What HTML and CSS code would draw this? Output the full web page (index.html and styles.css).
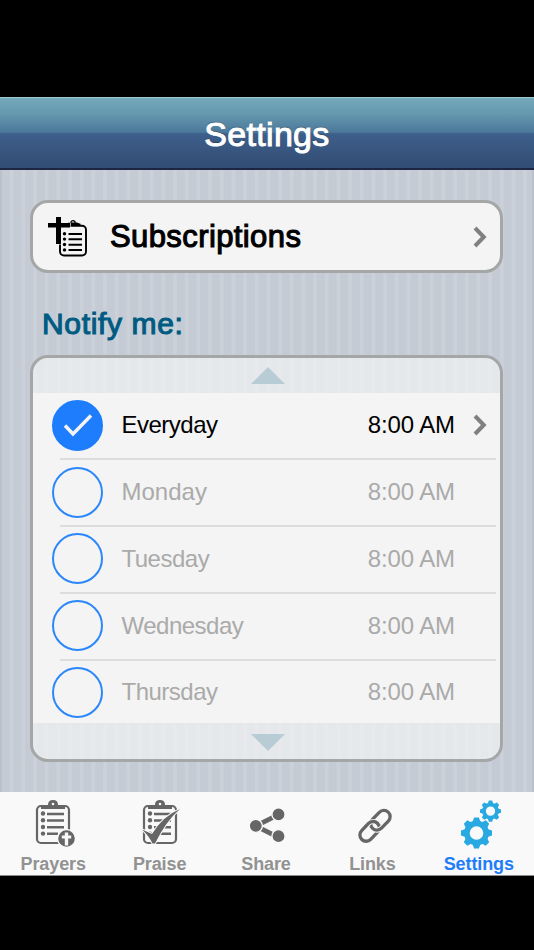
FILE: index.html
```html
<!DOCTYPE html>
<html lang="en">
<head>
  <meta charset="UTF-8" />
  <meta name="viewport" content="width=device-width, initial-scale=1.0" />
  <title>Settings</title>
  <link rel="stylesheet" href="styles.css">
</head>
<body>
  <header class="navbar"><h1>Settings</h1></header>

  <main class="content">
    <a class="card subscriptions">
      <svg class="sub-icon" width="40" height="42" viewBox="0 0 40 42">
        <rect x="12" y="9.800" width="26" height="29.700" rx="4" fill="none" stroke="#000" stroke-width="1.9"/>
        <path d="M20 9V7h2.500v3H31l2-2-4-1.500H20z" fill="#000"/>
        <circle cx="25" cy="6.800" r="2.200" fill="none" stroke="#000" stroke-width="1.200"/>
        <path d="M8 1h5v6h9v4.500h-9V28H8V11.500H0V7h8z" fill="#000" stroke="#f4f4f4" stroke-width="1.200" paint-order="stroke"/>
        <path d="M20.500 18H34M20.500 23.300H34M20.500 28.700H34M20.500 34H34" stroke="#000" stroke-width="2"/>
        <g fill="#000"><circle cx="16.500" cy="17.700" r="1.700"/><circle cx="16.500" cy="23.100" r="1.700"/><circle cx="16.500" cy="28.500" r="1.700"/><circle cx="16.500" cy="33.900" r="1.700"/></g>
      </svg>
      <span class="label">Subscriptions</span>
      <svg class="chevron" width="14" height="22" viewBox="0 0 14 22"><path d="M2 2l8.800 9L2 20"/></svg>
    </a>

    <h2>Notify me:</h2>

    <section class="card schedule">
      <div class="scroll-hint"><svg width="34" height="17" viewBox="0 0 34 17"><path d="M0 17L17 0l17 17z"/></svg></div>
      <ul class="days">
        <li class="day active">
          <span class="check"><svg width="30" height="24" viewBox="0 0 30 24"><path d="M2 12.500l8 8.500L28 2.500"/></svg></span>
          <span class="name">Everyday</span><span class="time">8:00 AM</span>
          <svg class="chevron" width="14" height="22" viewBox="0 0 14 22"><path d="M2 2l8.800 9L2 20"/></svg>
        </li>
        <li class="day"><span class="check"></span><span class="name wide">Monday</span><span class="time">8:00 AM</span></li>
        <li class="day"><span class="check"></span><span class="name">Tuesday</span><span class="time">8:00 AM</span></li>
        <li class="day"><span class="check"></span><span class="name">Wednesday</span><span class="time">8:00 AM</span></li>
        <li class="day"><span class="check"></span><span class="name">Thursday</span><span class="time">8:00 AM</span></li>
      </ul>
      <div class="scroll-hint bottom"><svg width="34" height="17" viewBox="0 0 34 17"><path d="M0 0h34L17 17z"/></svg></div>
    </section>
  </main>

  <nav class="tabbar">
    <a class="tab">
      <svg width="44" height="50" viewBox="-1 0 44 50">
        <rect x="5" y="6" width="32" height="37" rx="4" fill="none" stroke="#666" stroke-width="2.200"/>
        <path d="M9 9V7q0-2 2-2h5q0-5 5-5t5 5h5q2 0 2 2v2z"/>
        <circle cx="21" cy="4" r="1.300" fill="#f9f9f9"/>
        <path class="lines" d="M15 14h17M15 20.500h17M15 27.200h17M15 33.800h11"/>
        <circle cx="11" cy="13.500" r="2.200"/><circle cx="11" cy="20.200" r="2.200"/><circle cx="11" cy="27" r="2.200"/><circle cx="11" cy="33.600" r="2.200"/>
        <circle cx="34.500" cy="38.500" r="9" stroke="#f9f9f9" stroke-width="1.400"/>
        <path d="M32.800 32.500h3.400v3h3v3h-3v7h-3.400v-7h-3v-3h3z" fill="#f9f9f9"/>
      </svg>
      <span>Prayers</span>
    </a>
    <a class="tab">
      <svg width="44" height="50" viewBox="-1 0 44 50">
        <rect x="5" y="6" width="32" height="37" rx="4" fill="none" stroke="#666" stroke-width="2.200"/>
        <path d="M9 9V7q0-2 2-2h5q0-5 5-5t5 5h5q2 0 2 2v2z"/>
        <circle cx="21" cy="4" r="1.300" fill="#f9f9f9"/>
        <path class="lines" d="M15 14h17M15 20.500h17M15 27.200h17M15 33.800h17"/>
        <circle cx="11" cy="13.500" r="2.200"/><circle cx="11" cy="20.200" r="2.200"/><circle cx="11" cy="27" r="2.200"/><circle cx="11" cy="33.600" r="2.200"/>
        <path d="M3 29.500l10 4.500Q24 16 41 9 27 21 16 43.500h-2.500Q10 36 3 29.500z" stroke="#f9f9f9" stroke-width="2" paint-order="stroke"/>
      </svg>
      <span>Praise</span>
    </a>
    <a class="tab">
      <svg width="44" height="50" viewBox="-1 -1 44 50">
        <path d="M14 23.300l16-8M14 26.700l16 8" stroke="#666" stroke-width="4.800"/>
        <g stroke="#f9f9f9" stroke-width="1.400"><circle cx="10.800" cy="24.800" r="6.600"/><circle cx="33.500" cy="13.300" r="6.600"/><circle cx="33.500" cy="35.200" r="6.600"/></g>
      </svg>
      <span>Share</span>
    </a>
    <a class="tab">
      <svg width="44" height="50" viewBox="-2 -1 44 50">
        <g transform="rotate(-46 23 24.800)" fill="none" stroke="#666" stroke-width="3.300">
          <rect x="4" y="18.500" width="22.500" height="12.600" rx="6.300"/>
          <rect x="19.500" y="18.500" width="22.500" height="12.600" rx="6.300" stroke="#f9f9f9" stroke-width="5.200"/>
          <rect x="19.500" y="18.500" width="22.500" height="12.600" rx="6.300"/>
          <path d="M16 18.500h4.200a6.300 6.300 0 0 1 6.300 6.300" stroke="#f9f9f9" stroke-width="5.200"/>
          <path d="M15 18.500h5.200a6.300 6.300 0 0 1 6.300 6.300v1"/>
        </g>
      </svg>
      <span>Links</span>
    </a>
    <a class="tab selected">
      <svg width="44" height="50" viewBox="-1 0 44 50">
        <g transform="translate(18.500 33)">
          <circle r="9.600" fill="none" stroke="#29a9e1" stroke-width="5.600"/>
          <g id="teeth"><path id="tooth" d="M-4-11l1.600-4.500h4.800L4-11zM-4 11l1.600 4.500h4.800L4 11z"/><use href="#tooth" transform="rotate(45)"/><use href="#tooth" transform="rotate(90)"/><use href="#tooth" transform="rotate(135)"/></g>
        </g>
        <g transform="translate(32.500 11.100)">
          <circle r="6.500" fill="none" stroke="#29a9e1" stroke-width="3.700"/>
          <use href="#teeth" transform="scale(.68)"/>
        </g>
      </svg>
      <span>Settings</span>
    </a>
  </nav>
</body>
</html>
```
FILE: styles.css
```css
* {
  box-sizing: border-box;
}

body {
  margin: 0;
  padding: 97px 0 74px;
  height: 950px;
  background: #000;
  font-family: "Liberation Sans", Arial, sans-serif;
  display: flex;
  flex-direction: column;
  overflow: hidden;
}

.navbar {
  height: 73px;
  display: flex;
  align-items: center;
  justify-content: center;
  padding-top: 3px;
  background: linear-gradient(#74a9bb 0, #6699af 22%, #4b789b 49%, #3d5f8b 51%, #334e75 96%);
  border-top: 1px solid #9cc9d2;
  border-bottom: 2px solid #1c2542;
}

h1, h2 {
  margin: 0;
  font-weight: normal;
}

h1 {
  color: #fff;
  font-size: 34px;
  letter-spacing: 0.3px;
  -webkit-text-stroke: 1px #fff;
  text-shadow: 0 -1px 1px rgba(0, 0, 0, 0.4);
}

.content {
  height: 622px;
  padding: 30px 31px 0 30px;
  background: repeating-linear-gradient(90deg, #cad1d9 0, #cad1d9 1.3px, #c4cbd4 2.3px, #c4cbd4 9.3px, #cad1d9 10.3px, #cad1d9 11.67px);
  box-shadow: inset 2px 0 #bac1ca, inset -2px 0 #bac1ca;
}

.card {
  border: 3px solid #a5a6a6;
  border-radius: 18px;
  background: #f4f4f4;
}

.subscriptions {
  height: 73px;
  display: flex;
  align-items: center;
  padding: 0 13px 0 15px;
}

.subscriptions .label {
  flex: 1;
  margin-left: 22px;
  font-size: 31px;
  letter-spacing: 0.4px;
  -webkit-text-stroke: 1.1px #000;
}

.chevron path {
  fill: none;
  stroke: #808080;
  stroke-width: 4;
}

h2 {
  margin: 32px 0 0 12px;
  height: 50px;
  line-height: 37px;
  font-size: 30px;
  letter-spacing: 0.65px;
  color: #005b82;
  -webkit-text-stroke: 1.1px #005b82;
}

.schedule {
  height: 407px;
  background: transparent;
  overflow: hidden;
}

.scroll-hint {
  height: 35px;
  display: flex;
  align-items: center;
  justify-content: center;
  padding-left: 2px;
  background: rgba(244, 244, 244, 0.7);
}

.scroll-hint.bottom {
  height: 38px;
}

.scroll-hint path {
  fill: #b8ccd5;
}

.days {
  list-style: none;
  margin: 0;
  padding: 0;
  height: 330px;
  background: #f4f4f4;
  overflow: hidden;
}

.day {
  position: relative;
  height: 66.75px;
  display: flex;
  align-items: center;
  padding: 0 13px 2px 19px;
  font-size: 24px;
  color: #aaa;
}

.day + .day::before {
  content: "";
  position: absolute;
  top: -1.5px;
  left: 27px;
  right: 4px;
  height: 2px;
  background: #dcdcdc;
}

.check {
  width: 51px;
  height: 51px;
  border: 2.5px solid #2b87fb;
  border-radius: 50%;
  display: flex;
  align-items: center;
  justify-content: center;
}

.check path {
  fill: none;
  stroke: #f4f4f4;
  stroke-width: 3.4;
}

.name {
  flex: 1;
  margin-left: 18.5px;
  letter-spacing: -0.5px;
}

.name.wide {
  letter-spacing: 0;
}

.time {
  margin-right: 32px;
  letter-spacing: -0.1px;
}

.active {
  color: #000;
}

.active .check {
  background: #1d7dfc;
  border-color: #1d7dfc;
}

.active .time {
  margin-right: 18px;
}

.tabbar {
  height: 84px;
  display: flex;
  padding: 8px 2px 0 0;
  background: #f9f9f9;
  border-bottom: 1px solid #8a8a8a;
}

.tab {
  flex: 1;
  display: flex;
  flex-direction: column;
  align-items: center;
  font-size: 18px;
  font-weight: bold;
  line-height: 22px;
  letter-spacing: -0.1px;
  color: #929292;
}

.tab svg {
  fill: #666;
  margin-bottom: 3px;
}

.lines {
  stroke: #666;
  stroke-width: 2.4;
}

.selected {
  color: #1d7dfc;
}

.selected svg {
  fill: #29a9e1;
}
```
